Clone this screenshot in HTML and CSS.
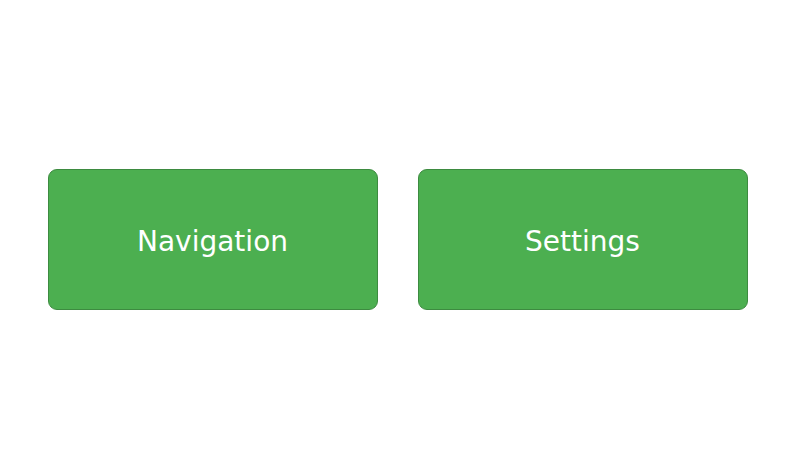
FILE: index.html
```html
<!DOCTYPE html>
<html>
<head>
<meta charset="utf-8">
<link rel="stylesheet" href="styles.css">
</head>
<body>
<div class="wrap">
  <button class="btn">Navigation</button>
  <button class="btn">Settings</button>
</div>
</body>
</html>
```

FILE: styles.css
```css
html, body {
  margin: 0;
  padding: 0;
  background: #ffffff;
}
.wrap {
  height: 475px;
  box-sizing: border-box;
  padding-top: 4px;
  display: flex;
  align-items: center;
  justify-content: center;
  gap: 40px;
}
.btn {
  box-sizing: border-box;
  width: 330px;
  height: 141px;
  background: #4caf50;
  border: 1px solid #3d8b40;
  border-radius: 9px;
  color: #ffffff;
  font-family: "DejaVu Sans", Verdana, sans-serif;
  font-size: 28px;
  padding: 3px 0 0 0;
  display: flex;
  align-items: center;
  justify-content: center;
}
```
